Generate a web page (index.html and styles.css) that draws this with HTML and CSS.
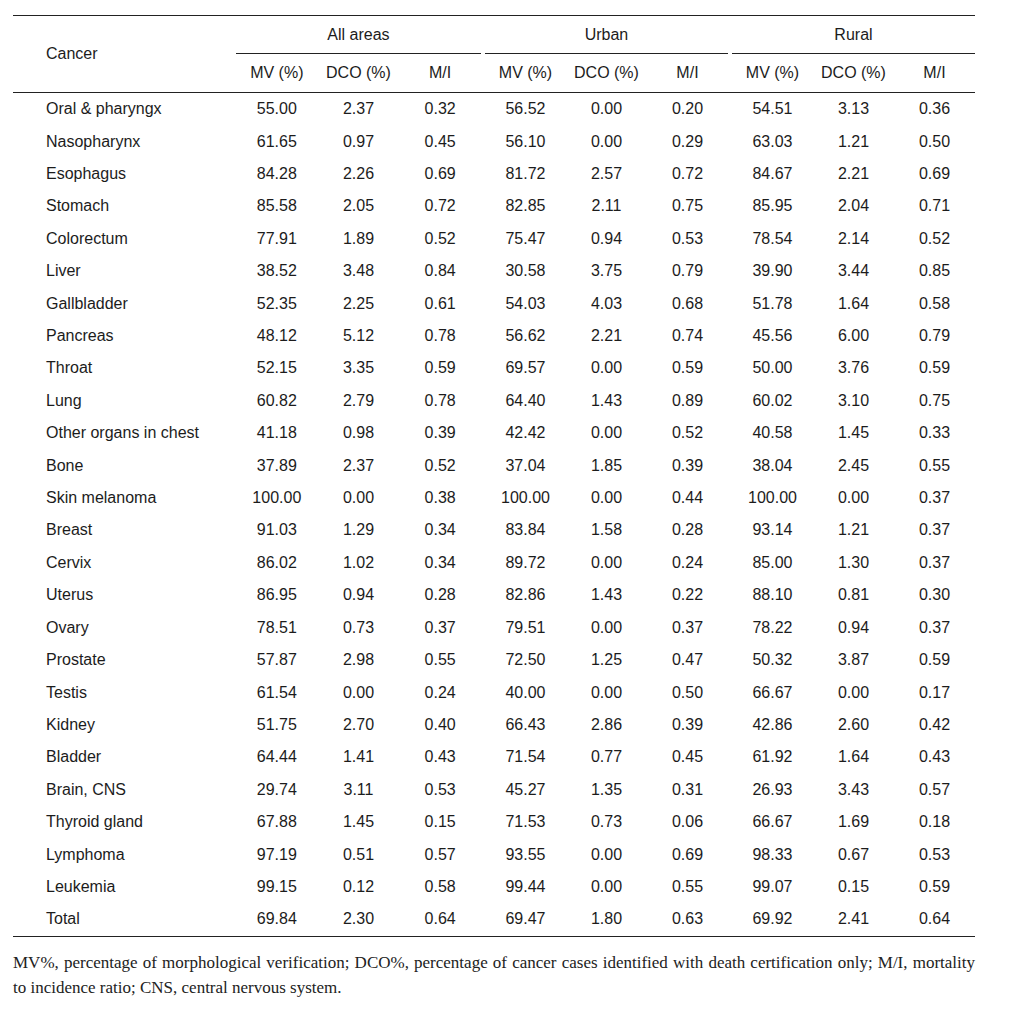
FILE: index.html
```html
<!DOCTYPE html>
<html>
<head>
<meta charset="utf-8">
<link rel="stylesheet" href="styles.css">
</head>
<body>
<div class="tbl">
  <div class="head">
    <div class="cancer">Cancer</div>
    <div class="grp g1">All areas</div>
    <div class="grp g2">Urban</div>
    <div class="grp g3">Rural</div>
    <div class="sub">MV (%)</div><div class="sub">DCO (%)</div><div class="sub">M/I</div>
    <div class="sub gs">MV (%)</div><div class="sub">DCO (%)</div><div class="sub">M/I</div>
    <div class="sub gs">MV (%)</div><div class="sub">DCO (%)</div><div class="sub">M/I</div>
  </div>
  <div id="body"></div>
</div>
<p class="note">MV%, percentage of morphological verification; DCO%, percentage of cancer cases identified with death certification only; M/I, mortality to incidence ratio; CNS, central nervous system.</p>
<script src="script.js"></script>
</body>
</html>
```
FILE: styles.css
```css
html, body { margin: 0; padding: 0; background: #fff; }
body {
  padding: 15px 36px 0 13px;
  color: #1c1c1c;
  font-family: "Liberation Sans", Arial, sans-serif;
  font-size: 16px;
}
.tbl {
  --cols: 223px 81.67px 81.67px 81.66px 85px 81px 81px 85px 81px 81px;
  width: 962px;
  border-top: 1px solid #222;
  border-bottom: 1px solid #222;
}
.head {
  display: grid;
  grid-template-columns: var(--cols);
  grid-template-rows: 38px 38px;
  border-bottom: 1px solid #222;
}
.cancer {
  grid-row: 1 / 3;
  grid-column: 1;
  align-self: center;
  padding-left: 33px;
  padding-bottom: 1px;
}
.grp {
  grid-row: 1;
  display: flex;
  align-items: center;
  justify-content: center;
  border-bottom: 1px solid #222;
  padding-top: 1px;
}
.g1 { grid-column: 2 / 5; }
.g2 { grid-column: 5 / 8; margin-left: 4px; }
.g3 { grid-column: 8 / 11; margin-left: 4px; }
.sub {
  grid-row: 2;
  display: flex;
  align-items: center;
  justify-content: center;
}
.gs { padding-left: 4px; }
.row {
  display: grid;
  grid-template-columns: var(--cols);
  height: 32.42px;
  align-items: center;
}
.row .name { padding-left: 33px; white-space: nowrap; }
.row .num { text-align: center; }
.row .num.gs { padding-left: 4px; }
.note {
  width: 962px;
  margin: 13px 0 0;
  font-family: "Liberation Serif", "Times New Roman", serif;
  font-size: 17px;
  line-height: 25px;
  text-align: justify;
  color: #222;
}
```
FILE: script.js
```js
const data = [
["Oral & pharyngx","55.00","2.37","0.32","56.52","0.00","0.20","54.51","3.13","0.36"],
["Nasopharynx","61.65","0.97","0.45","56.10","0.00","0.29","63.03","1.21","0.50"],
["Esophagus","84.28","2.26","0.69","81.72","2.57","0.72","84.67","2.21","0.69"],
["Stomach","85.58","2.05","0.72","82.85","2.11","0.75","85.95","2.04","0.71"],
["Colorectum","77.91","1.89","0.52","75.47","0.94","0.53","78.54","2.14","0.52"],
["Liver","38.52","3.48","0.84","30.58","3.75","0.79","39.90","3.44","0.85"],
["Gallbladder","52.35","2.25","0.61","54.03","4.03","0.68","51.78","1.64","0.58"],
["Pancreas","48.12","5.12","0.78","56.62","2.21","0.74","45.56","6.00","0.79"],
["Throat","52.15","3.35","0.59","69.57","0.00","0.59","50.00","3.76","0.59"],
["Lung","60.82","2.79","0.78","64.40","1.43","0.89","60.02","3.10","0.75"],
["Other organs in chest","41.18","0.98","0.39","42.42","0.00","0.52","40.58","1.45","0.33"],
["Bone","37.89","2.37","0.52","37.04","1.85","0.39","38.04","2.45","0.55"],
["Skin melanoma","100.00","0.00","0.38","100.00","0.00","0.44","100.00","0.00","0.37"],
["Breast","91.03","1.29","0.34","83.84","1.58","0.28","93.14","1.21","0.37"],
["Cervix","86.02","1.02","0.34","89.72","0.00","0.24","85.00","1.30","0.37"],
["Uterus","86.95","0.94","0.28","82.86","1.43","0.22","88.10","0.81","0.30"],
["Ovary","78.51","0.73","0.37","79.51","0.00","0.37","78.22","0.94","0.37"],
["Prostate","57.87","2.98","0.55","72.50","1.25","0.47","50.32","3.87","0.59"],
["Testis","61.54","0.00","0.24","40.00","0.00","0.50","66.67","0.00","0.17"],
["Kidney","51.75","2.70","0.40","66.43","2.86","0.39","42.86","2.60","0.42"],
["Bladder","64.44","1.41","0.43","71.54","0.77","0.45","61.92","1.64","0.43"],
["Brain, CNS","29.74","3.11","0.53","45.27","1.35","0.31","26.93","3.43","0.57"],
["Thyroid gland","67.88","1.45","0.15","71.53","0.73","0.06","66.67","1.69","0.18"],
["Lymphoma","97.19","0.51","0.57","93.55","0.00","0.69","98.33","0.67","0.53"],
["Leukemia","99.15","0.12","0.58","99.44","0.00","0.55","99.07","0.15","0.59"],
["Total","69.84","2.30","0.64","69.47","1.80","0.63","69.92","2.41","0.64"]
];
const body = document.getElementById("body");
for (const r of data) {
  const row = document.createElement("div");
  row.className = "row";
  r.forEach((v, i) => {
    const c = document.createElement("div");
    c.className = i === 0 ? "name" : (i === 4 || i === 7 ? "num gs" : "num");
    c.textContent = v;
    row.appendChild(c);
  });
  body.appendChild(row);
}
```
